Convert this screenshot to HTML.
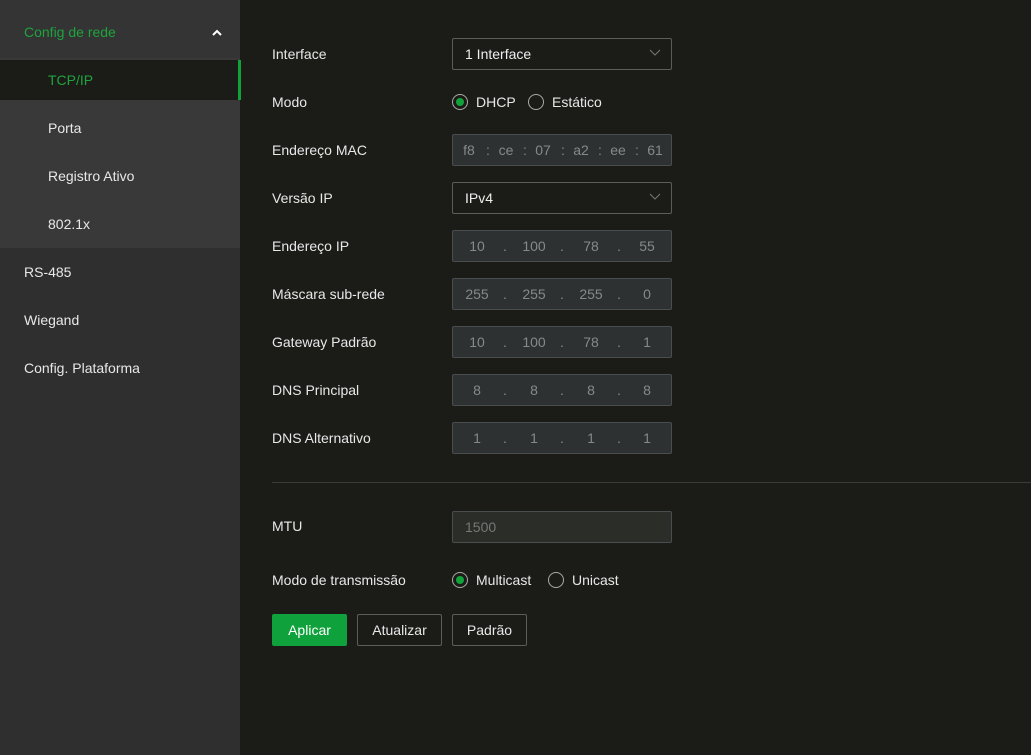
<!DOCTYPE html>
<html><head><meta charset="utf-8"><style>
*{margin:0;padding:0;box-sizing:border-box}
body{width:1031px;height:755px;background:#1b1c18;font-family:"Liberation Sans",sans-serif;font-size:14px;color:#e8e8e8;position:relative;overflow:hidden}
.sb{position:absolute;left:0;top:0;width:240px;height:755px;background:#2e2f2e}
.a{position:absolute}
.lbl{position:absolute;left:272px;transform:translateY(-50%)}
.box{position:absolute;left:452px;width:220px;height:32px;border:1px solid #4a4d4d;border-radius:2px}
.sel{background:#1b1c18;border-color:#5a5d5a;padding-left:12px;line-height:30px;color:#eee}
.sel svg{position:absolute;right:10px;top:10px}
.dis{background:#2e3131;color:#868989}
.dis span{position:absolute;top:0;line-height:30px;transform:translateX(-50%)}
.r{position:absolute;width:16px;height:16px;border:1px solid #aaa;border-radius:50%}
.r.on::after{content:"";position:absolute;left:3px;top:3px;width:8px;height:8px;border-radius:50%;background:#12a23b}
.btn{position:absolute;top:614px;height:32px;line-height:30px;text-align:center;border:1px solid #5a5d5a;border-radius:2px}
</style></head><body>
<div class="sb"></div>
<div class="a" style="left:0;top:0;width:240px;height:58px;background:#333433"></div>
<div class="a" style="left:0;top:58px;width:240px;height:190px;background:#383938"></div>
<div class="a" style="left:0;top:60px;width:240px;height:40px;background:#1b1c18"></div>
<div class="a" style="left:238px;top:60px;width:3px;height:40px;background:#12a23b"></div>
<div class="a" style="left:24px;top:24px;color:#1fa33e">Config de rede</div>
<svg class="a" style="left:212px;top:29px" width="10" height="7"><path d="M1 6L5 2L9 6" stroke="#fff" stroke-width="2" fill="none"/></svg>
<div class="a" style="left:48px;top:72px;color:#1fa33e">TCP/IP</div>
<div class="a" style="left:48px;top:120px">Porta</div>
<div class="a" style="left:48px;top:168px">Registro Ativo</div>
<div class="a" style="left:48px;top:216px">802.1x</div>
<div class="a" style="left:24px;top:264px">RS-485</div>
<div class="a" style="left:24px;top:312px">Wiegand</div>
<div class="a" style="left:24px;top:360px">Config. Plataforma</div>

<div class="lbl" style="top:54px">Interface</div>
<div class="lbl" style="top:102px">Modo</div>
<div class="lbl" style="top:150px">Endereço MAC</div>
<div class="lbl" style="top:198px">Versão IP</div>
<div class="lbl" style="top:246px">Endereço IP</div>
<div class="lbl" style="top:294px">Máscara sub-rede</div>
<div class="lbl" style="top:342px">Gateway Padrão</div>
<div class="lbl" style="top:390px">DNS Principal</div>
<div class="lbl" style="top:438px">DNS Alternativo</div>
<div class="lbl" style="top:526px">MTU</div>
<div class="lbl" style="top:580px">Modo de transmissão</div>

<div class="box sel" style="top:38px">1 Interface<svg width="12" height="8"><path d="M1 1L6 6L11 1" stroke="#777" fill="none"/></svg></div>
<div class="r on" style="left:452px;top:94px"></div><div class="a" style="left:476px;top:94px">DHCP</div>
<div class="r" style="left:528px;top:94px"></div><div class="a" style="left:552px;top:94px">Estático</div>
<div class="box dis" style="top:134px"><span style="left:16px">f8</span><span style="left:35px">:</span><span style="left:53px">ce</span><span style="left:72px">:</span><span style="left:90px">07</span><span style="left:110px">:</span><span style="left:128px">a2</span><span style="left:147px">:</span><span style="left:165px">ee</span><span style="left:184px">:</span><span style="left:202px">61</span></div>
<div class="box sel" style="top:182px">IPv4<svg width="12" height="8"><path d="M1 1L6 6L11 1" stroke="#777" fill="none"/></svg></div>

<div class="box dis" style="top:230px"><span style="left:24px">10</span><span style="left:52px">.</span><span style="left:81px">100</span><span style="left:109px">.</span><span style="left:138px">78</span><span style="left:166px">.</span><span style="left:194px">55</span></div>
<div class="box dis" style="top:278px"><span style="left:24px">255</span><span style="left:52px">.</span><span style="left:81px">255</span><span style="left:109px">.</span><span style="left:138px">255</span><span style="left:166px">.</span><span style="left:194px">0</span></div>
<div class="box dis" style="top:326px"><span style="left:24px">10</span><span style="left:52px">.</span><span style="left:81px">100</span><span style="left:109px">.</span><span style="left:138px">78</span><span style="left:166px">.</span><span style="left:194px">1</span></div>
<div class="box dis" style="top:374px"><span style="left:24px">8</span><span style="left:52px">.</span><span style="left:81px">8</span><span style="left:109px">.</span><span style="left:138px">8</span><span style="left:166px">.</span><span style="left:194px">8</span></div>
<div class="box dis" style="top:422px"><span style="left:24px">1</span><span style="left:52px">.</span><span style="left:81px">1</span><span style="left:109px">.</span><span style="left:138px">1</span><span style="left:166px">.</span><span style="left:194px">1</span></div>

<div class="a" style="left:272px;top:482px;width:759px;height:1px;background:#3a3c3a"></div>

<div class="box dis" style="top:511px;background:#2b2d29;padding-left:12px;line-height:30px;color:#777">1500</div>
<div class="r on" style="left:452px;top:572px"></div><div class="a" style="left:476px;top:572px">Multicast</div>
<div class="r" style="left:548px;top:572px"></div><div class="a" style="left:572px;top:572px">Unicast</div>

<div class="btn" style="left:272px;width:75px;background:#0fa23c;border-color:#0fa23c;color:#fff">Aplicar</div>
<div class="btn" style="left:357px;width:85px">Atualizar</div>
<div class="btn" style="left:452px;width:75px">Padrão</div>
</body></html>
